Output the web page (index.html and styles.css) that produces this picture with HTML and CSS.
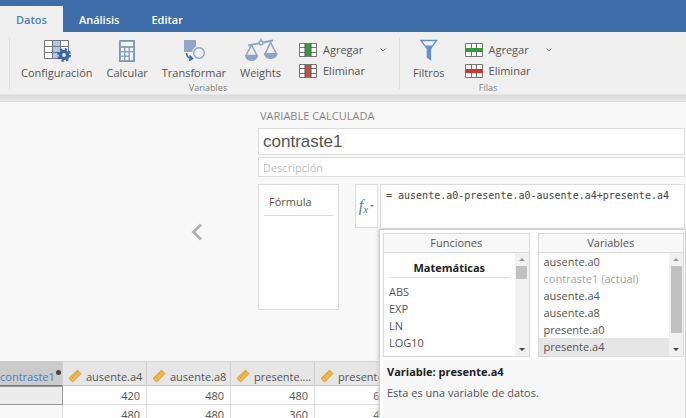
FILE: index.html
```html
<!DOCTYPE html>
<html lang="es">
<head>
<meta charset="utf-8">
<title>Variable calculada</title>
<link rel="stylesheet" href="styles.css">
</head>
<body>
<svg class="defs" width="0" height="0" aria-hidden="true">
  <symbol id="ruler" viewBox="0 0 14 14">
    <path d="M1 9.5 9.5 1.2 13 4.6 4.6 13Z" fill="#f2b84b" stroke="#dd9a32" stroke-width="1" stroke-linejoin="round"/>
    <path d="M3.3 7.4 4.8 9M5.2 5.6 6.3 6.7M7 3.8 8.5 5.4M8.8 2.1 9.9 3.2" stroke="#c98722" stroke-width=".8"/>
  </symbol>
  <symbol id="chevron" viewBox="0 0 8 6"><path d="M1.500 1.500 4 4 6.500 1.500" fill="none" stroke="#808080"/></symbol>
</svg>

<header class="tabs">
  <button class="tab tab-active">Datos</button>
  <button class="tab">Análisis</button>
  <button class="tab">Editar</button>
</header>

<div class="toolbar">
  <section class="group group-variables">
    <div class="tools">
      <button class="tool">
        <svg width="28" height="24" viewBox="0 0 28 24">
          <path d="M1.500 2.500h24v18h-24z" fill="#fff"/>
          <path d="M9.500 2.500h8v18h-8z" fill="#a9c9f5"/>
          <path d="M1.500 2.500h24v18h-24zM1.500 8.500h24M1.500 14.500h24M9.500 2.500v18M17.500 2.500v18" fill="none" stroke="#777"/>
          <circle cx="21" cy="17" r="5.500" fill="none" stroke="#3768ab" stroke-width="3" stroke-dasharray="2.160 2.160"/>
          <circle cx="21" cy="17" r="3.500" fill="#f0f0f0" stroke="#3768ab" stroke-width="3.200"/>
        </svg>
        <span>Configuración</span>
      </button>
      <button class="tool">
        <svg width="18" height="24" viewBox="0 0 18 24">
          <path d="M1.500 2.500h15v21h-15z" fill="#8fa3c8" stroke="#7e94bd"/>
          <path d="M3 4h12v4H3zM3 10h3v3H3zM7.500 10h3v3h-3zM12 10h3v3h-3zM3 14.500h3v3H3zM7.500 14.500h3v3h-3zM12 14.500h3V22h-3zM3 19h3v3H3zM7.500 19h3v3h-3z" fill="#f4f5f8"/>
        </svg>
        <span>Calcular</span>
      </button>
      <button class="tool">
        <svg width="24" height="24" viewBox="0 0 24 24">
          <path d="M2 2h12v12H2z" fill="#92a5c8"/>
          <circle cx="17" cy="15" r="7" fill="#f0f0f0"/>
          <circle cx="17" cy="15" r="5.300" fill="none" stroke="#92a5c8" stroke-width="1.500"/>
          <path d="M4.500 15c0 3 1.500 5 5 5.500M7.500 17.500l3 3-3.500 2" fill="none" stroke="#3768ab" stroke-width="1.600"/>
        </svg>
        <span>Transformar</span>
      </button>
      <button class="tool">
        <svg width="34" height="24" viewBox="0 0 34 24">
          <path d="M4 7.500 15 5.300M19 4.500l10-2.200" stroke="#8fa3c8" stroke-width="1.800"/>
          <circle cx="17" cy="4.800" r="1.900" fill="none" stroke="#8fa3c8" stroke-width="1.500"/>
          <path d="M17 .5v2.500" stroke="#8fa3c8" stroke-width="1.500"/>
          <path d="M7.500 7 2 17.500h11ZM26.500 4.500 21 16h11.500Z" fill="none" stroke="#8fa3c8" stroke-width="1.500"/>
          <path d="M1 17h13c0 3.800-3 6-6.500 6S1 20.800 1 17ZM20 15h13.500c0 3.800-3 6-6.800 6S20 18.800 20 15Z" fill="#8fa3c8"/>
        </svg>
        <span>Weights</span>
      </button>
      <div class="pair">
        <button class="mini">
          <svg width="18" height="14" viewBox="0 0 18 14"><path d="M.5.500h17v13H.5z" fill="#fff"/><path d="M.5.500h17v13H.5zM.5 4.500h17M.5 9.500h17" fill="none" stroke="#777"/><path d="M6 1h6v12H6z" fill="#389a3c"/><path d="M6 .5v13M12 .5v13" stroke="#555"/></svg>
          <span>Agregar</span>
          <svg class="more" width="8" height="6"><use href="#chevron"/></svg>
        </button>
        <button class="mini">
          <svg width="18" height="14" viewBox="0 0 18 14"><path d="M.5.500h17v13H.5z" fill="#fff"/><path d="M.5.500h17v13H.5zM.5 4.500h17M.5 9.500h17" fill="none" stroke="#777"/><path d="M6 1h6v12H6z" fill="#c05048"/><path d="M6 .5v13M12 .5v13" stroke="#555"/></svg>
          <span>Eliminar</span>
        </button>
      </div>
    </div>
    <div class="group-name">Variables</div>
  </section>
  <section class="group group-rows">
    <div class="tools">
      <button class="tool">
        <svg width="22" height="24" viewBox="0 0 22 24">
          <path d="M1.500 1.800h18.500l-6.800 9.200v12L8.700 19.500V11Z" fill="#6590c9"/>
          <path d="M4.500 3.300h12.500L14 7.500H7.500Z" fill="#f4f6fa"/>
        </svg>
        <span>Filtros</span>
      </button>
      <div class="pair">
        <button class="mini">
          <svg width="18" height="14" viewBox="0 0 18 14"><path d="M.5.500h17v13H.5z" fill="#fff"/><path d="M.5.500h17v13H.5zM6.500.500v13M11.500.500v13" fill="none" stroke="#777"/><path d="M0 5h18v4H0z" fill="#389a3c"/></svg>
          <span>Agregar</span>
          <svg class="more" width="8" height="6"><use href="#chevron"/></svg>
        </button>
        <button class="mini">
          <svg width="18" height="14" viewBox="0 0 18 14"><path d="M.5.500h17v13H.5z" fill="#fff"/><path d="M.5.500h17v13H.5zM6.500.500v13M11.500.500v13" fill="none" stroke="#777"/><path d="M0 5h18v4H0z" fill="#d23430"/></svg>
          <span>Eliminar</span>
        </button>
      </div>
    </div>
    <div class="group-name">Filas</div>
  </section>
</div>

<main class="editor">
  <button class="back" aria-label="Anterior">
    <svg width="12" height="18" viewBox="0 0 12 18"><path d="M10 1.500 2.500 9l7.500 7.500" fill="none" stroke="#b3b3b3" stroke-width="3"/></svg>
  </button>
  <div class="form">
    <h1 class="title">VARIABLE CALCULADA</h1>
    <input class="name" aria-label="Nombre" value="contraste1">
    <input class="description" aria-label="Descripción" placeholder="Descripción">
    <div class="formula-row">
      <div class="options"><div class="option">Fórmula</div></div>
      <button class="fx" aria-label="Funciones"><span class="fx-f">f</span><span class="fx-x">x</span><span class="fx-arrow"></span></button>
      <div class="formula">
        <input class="formula-input" aria-label="Fórmula" value="= ausente.a0-presente.a0-ausente.a4+presente.a4">
        <div class="popup">
          <div class="lists">
            <section class="list">
              <h2 class="list-title">Funciones</h2>
              <div class="list-body">
                <div class="list-items functions">
                  <h3 class="category">Matemáticas</h3>
                  <div class="item">ABS</div>
                  <div class="item">EXP</div>
                  <div class="item">LN</div>
                  <div class="item">LOG10</div>
                </div>
                <div class="scroll"><i class="up"></i><i class="thumb thumb-short"></i><i class="down"></i></div>
              </div>
            </section>
            <section class="list">
              <h2 class="list-title">Variables</h2>
              <div class="list-body">
                <div class="list-items">
                  <div class="item">ausente.a0</div>
                  <div class="item item-off">contraste1 (actual)</div>
                  <div class="item">ausente.a4</div>
                  <div class="item">ausente.a8</div>
                  <div class="item">presente.a0</div>
                  <div class="item item-on">presente.a4</div>
                </div>
                <div class="scroll"><i class="up"></i><i class="thumb thumb-long"></i><i class="down"></i></div>
              </div>
            </section>
          </div>
          <div class="info">
            <strong class="info-title">Variable: presente.a4</strong>
            <p class="info-text">Esta es una variable de datos.</p>
          </div>
        </div>
      </div>
    </div>
  </div>
</main>

<div class="data">
  <table class="grid">
    <colgroup><col class="col-first"><col><col><col><col><col class="col-rest"></colgroup>
    <thead>
      <tr>
        <th class="selected"><span class="head">contraste1<i class="dot"></i></span></th>
        <th><span class="head"><svg width="14" height="14"><use href="#ruler"/></svg><span class="label">ausente.a4</span></span></th>
        <th><span class="head"><svg width="14" height="14"><use href="#ruler"/></svg><span class="label">ausente.a8</span></span></th>
        <th><span class="head"><svg width="14" height="14"><use href="#ruler"/></svg><span class="label">presente....</span></span></th>
        <th><span class="head"><svg width="14" height="14"><use href="#ruler"/></svg><span class="label">presente....</span></span></th>
        <th></th>
      </tr>
    </thead>
    <tbody>
      <tr><td class="cell-on"></td><td>420</td><td>480</td><td>480</td><td>600</td><td></td></tr>
      <tr><td class="computed"></td><td>480</td><td>480</td><td>360</td><td>480</td><td></td></tr>
    </tbody>
  </table>
</div>
</body>
</html>
```

FILE: styles.css
```css
* { box-sizing: border-box; }

body {
  margin: 0;
  height: 100vh;
  overflow: hidden;
  display: flex;
  flex-direction: column;
  background: #f8f8f8;
  color: #555;
  font: 11px/17px "Open Sans", "Noto Sans", sans-serif;
}

button, input { font: inherit; color: inherit; margin: 0; }
button { border: 0; background: none; padding: 0; }
h1, h2, h3, p { margin: 0; font-weight: 400; font-size: inherit; }
.defs { position: absolute; }

/* Tabs */
.tabs {
  display: flex;
  flex: none;
  padding-top: 6px;
  background: #3e6da9;
}
.tab {
  height: 26px;
  padding: 0 16px;
  color: #fff;
  font-weight: 600;
}
.tab-active {
  background: #f0f0f0;
  color: #4a7fc1;
}

/* Toolbar */
.toolbar {
  display: flex;
  flex: none;
  height: 70px;
  padding: 6px 0 0 9px;
  background: linear-gradient(#f0f0f0 62px, #d9d9d9 63px, #e9e9e9 69px, #dcdcdc 69px);
}
.group {
  display: flex;
  flex-direction: column;
  height: 51px;
  border-left: 1px solid #dedede;
}
.group-variables { width: 390px; padding-left: 7px; }
.group-rows { width: 168px; padding-left: 9px; }
.tools { display: flex; height: 44px; }
.tool {
  display: flex;
  flex: none;
  flex-direction: column;
  align-items: center;
  height: 44px;
  padding: 0 4px;
  margin-right: 6px;
}
.tool svg { flex: none; }
.tool span { padding-top: 2px; }
.pair { display: flex; flex-direction: column; flex: 1; padding: 1px 0 0 8px; }
.group-rows .pair { padding-left: 10px; }
.mini { display: flex; align-items: center; gap: 6px; height: 21px; }
.more { margin-left: 10px; }
.group-name {
  color: #808080;
  font-size: 9px;
  line-height: 12px;
  text-align: center;
}

/* Editor */
.editor {
  display: flex;
  flex: none;
  background: #f8f8f8;
}
.back { width: 258px; padding: 4px 0 0 135px; }
.form {
  display: flex;
  flex: 1;
  flex-direction: column;
  min-width: 0;
  padding: 6px 1px 51px 0;
}
.title { color: #868686; line-height: 16px; padding: 0 2px; margin-bottom: 4px; }
.name, .description, .formula-input, .options, .fx {
  border: 1px solid #dcdcdc;
  background: #fff;
}
.name {
  height: 27px;
  padding: 0 4px;
  font: 17px "Liberation Sans", sans-serif;
}
.description { height: 20px; margin: 2px 0 7px; padding: 0 4px; }
.description::placeholder { color: #bcbcbc; opacity: 1; }
.formula-row { display: flex; align-items: flex-start; }
.options { width: 81px; height: 126px; padding: 8px 5px; }
.option { padding: 0 5px 5px; border-bottom: 1px solid #dcdcdc; }
.fx {
  display: flex;
  align-items: center;
  justify-content: center;
  width: 23px;
  height: 44px;
  margin: 0 2px 0 16px;
  color: #4a80c4;
  font: italic 16px "Liberation Serif", serif;
}
.fx-x { font-size: 11px; padding-top: 5px; }
.fx-arrow { margin-left: 2px; border: 2px solid transparent; border-top-color: #4a80c4; border-bottom: 0; }
.formula { position: relative; flex: 1; min-width: 0; }
.formula-input {
  display: block;
  width: 100%;
  height: 45px;
  padding: 0 5px 22px;
  color: #444;
  font: 10px "DejaVu Sans Mono", monospace;
}

/* Function and variable picker */
.popup {
  position: absolute;
  z-index: 1;
  top: 100%;
  left: -1px;
  right: -1px;
  padding: 3px 1px 0 3px;
  background: #fff;
  border: 1px solid #cfcfcf;
  box-shadow: -1px 0 3px #ccc;
}
.lists { display: flex; gap: 8px; }
.list { flex: 1; min-width: 0; border: 1px solid #dadada; }
.list-title {
  height: 19px;
  background: #f8f8f8;
  border-bottom: 1px solid #dadada;
  text-align: center;
}
.list-body { display: flex; height: 103px; }
.list-items { flex: 1; overflow: hidden; }
.functions { padding-top: 6px; }
.category {
  margin: 0 5px 5px;
  padding-bottom: 1px;
  border-bottom: 1px solid #dcdcdc;
  color: #222;
  font-weight: 700;
  text-align: center;
}
.item { padding: 0 5px; }
.item-off { color: #a2a2a2; }
.item-on { background: #e6e6e6; height: 18px; }
.scroll {
  display: flex;
  flex-direction: column;
  align-items: center;
  width: 14px;
  padding: 5px 0;
  background: #f1f1f1;
}
.up { border: 3px solid transparent; border-bottom-color: #999; border-top: 0; margin-bottom: 5px; }
.down { border: 3px solid transparent; border-top-color: #444; border-bottom: 0; margin-top: auto; }
.thumb { width: 11px; background: #c1c1c1; }
.thumb-short { height: 13px; }
.thumb-long { height: 67px; }
.info { min-height: 70px; margin-top: 3px; padding: 3px 4px; background: #f7f7f7; }
.info-title { color: #222; }
.info-text { margin-top: 4px; }

/* Data grid */
.data { flex: 1; min-height: 0; overflow: hidden; background: #f8f8f8; }
.grid { width: 100%; table-layout: fixed; border-collapse: separate; border-spacing: 0; }
col { width: 84px; }
.col-first { width: 63px; }
.col-rest { width: auto; }
th {
  height: 25px;
  padding: 6px 0 0 5px;
  background: linear-gradient(#dadada 1px, #e6e6e6 2px);
  border-bottom: 1px solid #c8c8c8;
  border-right: 1px solid #d0d0d0;
  font-weight: 400;
  text-align: left;
}
.head { display: flex; align-items: center; gap: 4px; }
.label { white-space: nowrap; }
.selected {
  padding-left: 0;
  background: #cbcbcb;
  border-bottom-color: #4a80c4;
  color: #4a80c4;
}
.selected .head { gap: 1px; }
.dot { flex: none; width: 5px; height: 5px; margin-bottom: 8px; border-radius: 50%; background: #444; }
td {
  height: 19px;
  padding: 0 6px 0 0;
  background: #fff;
  border-right: 1px solid #dedede;
  border-bottom: 1px solid #dedede;
  line-height: 17px;
  text-align: right;
}
.cell-on { background: #ececec; border: 1px solid #999; border-left: 0; }
.computed { background: #f8f8f8; }
```
